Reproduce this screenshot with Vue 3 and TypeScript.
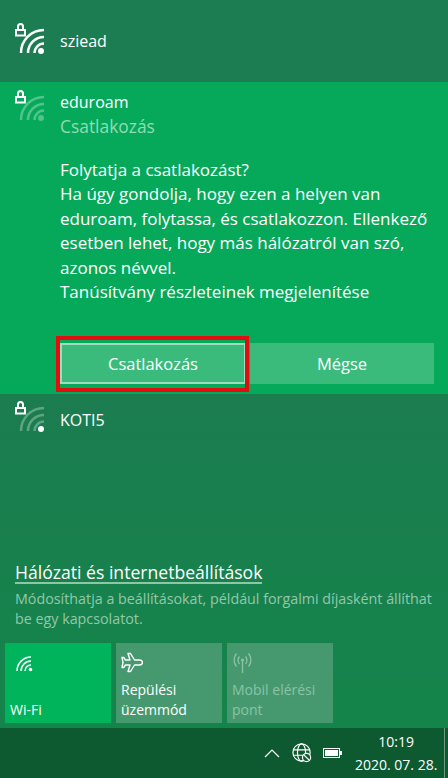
<template>
  <div class="flyout">
    <div class="net-row top">
      <svg class="wifi" viewBox="0 0 32 40" width="32" height="40">
        <path class="lock" d="M2 14h9v5.500H2zM4 14v-3.500a2.500 2.500 0 0 1 5 0V14" />
        <g class="arcs">
          <path d="M7 37a23 23 0 0 1 23-23" />
          <path d="M14 37a16 16 0 0 1 16-16" />
          <path d="M20.500 37a9.500 9.500 0 0 1 9.500-9.500" />
        </g>
        <circle class="dot" cx="27" cy="35" r="3" />
      </svg>
      <span class="net-name">sziead</span>
    </div>

    <section class="selected">
      <div class="sel-head">
        <svg class="wifi" viewBox="0 0 32 40" width="32" height="40">
          <path class="lock" d="M2 14h9v5.500H2zM4 14v-3.500a2.500 2.500 0 0 1 5 0V14" />
          <g class="arcs dim">
            <path d="M7 37a23 23 0 0 1 23-23" />
            <path d="M14 37a16 16 0 0 1 16-16" />
            <path d="M20.500 37a9.500 9.500 0 0 1 9.500-9.500" />
          </g>
          <circle class="dot dim" cx="27" cy="35" r="3" />
        </svg>
        <div>
          <div class="net-name">eduroam</div>
          <div class="net-status">Csatlakozás</div>
        </div>
      </div>
      <div class="message">
        <p v-for="line in messageLines" :key="line">{{ line }}</p>
      </div>
      <div class="actions">
        <button class="btn btn-focus">Csatlakozás<span class="highlight"></span></button>
        <button class="btn">Mégse</button>
      </div>
    </section>

    <div class="lower">
      <div class="net-row koti">
        <svg class="wifi" viewBox="0 0 32 40" width="32" height="40">
          <path class="lock" d="M2 14h9v5.500H2zM4 14v-3.500a2.500 2.500 0 0 1 5 0V14" />
          <g class="arcs dim">
            <path d="M7 37a23 23 0 0 1 23-23" />
            <path d="M14 37a16 16 0 0 1 16-16" />
            <path d="M20.500 37a9.500 9.500 0 0 1 9.500-9.500" />
          </g>
          <circle class="dot" cx="27" cy="35" r="3" />
        </svg>
        <span class="net-name">KOTI5</span>
      </div>

      <div class="settings">
        <a class="settings-link">Hálózati és internetbeállítások</a>
        <p class="settings-help">Módosíthatja a beállításokat, például forgalmi díjasként állíthat be egy kapcsolatot.</p>
      </div>

      <div class="tiles">
        <div class="tile on">
          <svg viewBox="0 0 18 16" width="18" height="16" class="tile-icon">
            <g class="arcs thin">
              <path d="M1 15a14 14 0 0 1 14-14" />
              <path d="M5 15a10 10 0 0 1 10-10" />
              <path d="M9 15a6 6 0 0 1 6-6" />
            </g>
            <circle class="dot" cx="14.500" cy="13.500" r="1.800" />
          </svg>
          <span class="tile-label">Wi-Fi</span>
        </div>
        <div class="tile">
          <svg viewBox="0 0 22 22" width="22" height="22" class="tile-icon">
            <path class="plane" d="M7 1.500h2.500L13.500 8h5c2 0 3 1.500 3 2.500s-1 2.500-3 2.500h-5L9.500 19.500H7L9 13H4.500l-1.800 2.500H1L2 10.500 1 5.500h1.700L4.500 8H9z" />
          </svg>
          <span class="tile-label">Repülési üzemmód</span>
        </div>
        <div class="tile off">
          <svg viewBox="0 0 22 22" width="22" height="22" class="tile-icon">
            <g class="mobile">
              <path d="M4.500 1.500a10 10 0 0 0 0 13M16.500 1.500a10 10 0 0 1 0 13" />
              <path d="M7.500 4.500a6 6 0 0 0 0 7.500M13.500 4.500a6 6 0 0 1 0 7.500" />
              <path d="M10.500 9v12" />
            </g>
            <circle cx="10.500" cy="8" r="1.600" fill="currentColor" />
          </svg>
          <span class="tile-label">Mobil elérési pont</span>
        </div>
      </div>
    </div>

    <footer class="taskbar">
      <svg viewBox="0 0 16 10" width="16" height="10" class="chev"><path d="M1 9l7-7 7 7" /></svg>
      <svg viewBox="0 0 22 22" width="20" height="20" class="globe">
        <circle cx="10.500" cy="10.500" r="9.500" />
        <ellipse cx="10.500" cy="10.500" rx="4.500" ry="9.500" />
        <path d="M1.500 7.500h18M1.500 13.500h18" />
        <circle class="badge" cx="16" cy="16" r="4.500" />
        <path d="M13 13l6 6" />
      </svg>
      <div class="battery"><span class="battery-fill"></span></div>
      <div class="clock">
        <div>10:19</div>
        <div>2020. 07. 28.</div>
      </div>
    </footer>
  </div>
</template>

<script setup lang="ts">
const messageLines: string[] = [
  'Folytatja a csatlakozást?',
  'Ha úgy gondolja, hogy ezen a helyen van',
  'eduroam, folytassa, és csatlakozzon. Ellenkező',
  'esetben lehet, hogy más hálózatról van szó,',
  'azonos névvel.',
  'Tanúsítvány részleteinek megjelenítése',
]
</script>

<style>
html,
body {
  margin: 0;
  background: #0e5a30;
}
</style>

<style scoped>
.flyout {
  width: 448px;
  height: 778px;
  display: flex;
  flex-direction: column;
  overflow: hidden;
  color: #fff;
  font-family: "Open Sans", "Noto Sans", sans-serif;
  font-size: 16px;
}

p {
  margin: 0;
}

.wifi {
  flex: none;
  margin-right: 14px;
}

.lock,
.arcs path {
  fill: none;
  stroke: #fff;
}

.lock {
  stroke-width: 2;
}

.arcs path {
  stroke-width: 2.500;
}

.arcs.thin path {
  stroke-width: 1.500;
}

.arcs.dim path {
  opacity: 0.3;
}

.dot {
  fill: #fff;
}

.dot.dim {
  opacity: 0.3;
}

.net-row {
  display: flex;
  padding-left: 14px;
  background: #1c7d52;
}

.net-row.top {
  height: 82px;
  flex: none;
  padding-top: 16px;
  box-sizing: border-box;
}

.net-row .net-name {
  margin-top: 14px;
}

.selected {
  height: 312px;
  flex: none;
  box-sizing: border-box;
  background: #06a95a;
  display: flex;
  flex-direction: column;
}

.sel-head {
  display: flex;
  padding-left: 14px;
  padding-top: 1px;
  height: 55px;
  box-sizing: border-box;
}

.sel-head .net-name {
  margin-top: 7px;
  line-height: 24px;
}

.net-status {
  color: #8fdcb6;
  font-size: 17.400px;
  line-height: 24px;
}

.message {
  padding: 21px 14px 0 60px;
  font-size: 17px;
  line-height: 24.400px;
  white-space: nowrap;
}

.actions {
  display: flex;
  margin-top: auto;
  margin-bottom: 10px;
  padding: 0 14px 0 60px;
  gap: 4px;
}

.btn {
  position: relative;
  flex: 1;
  height: 41px;
  border: 0;
  padding: 0;
  background: #3abb7c;
  color: #fff;
  font: inherit;
  font-size: 16.500px;
}

.btn-focus {
  flex: none;
  width: 186px;
  box-sizing: border-box;
  border: 2px solid #9ddcbd;
}

.highlight {
  position: absolute;
  top: -9px;
  right: -5px;
  bottom: -10px;
  left: -6px;
  border: 4px solid #e20d0f;
}

.lower {
  flex: 1;
  display: flex;
  flex-direction: column;
  background: linear-gradient(#1b7c50, #14854a);
}

.net-row.koti {
  background: transparent;
  height: 40px;
}

.net-row.koti .net-name {
  margin-top: 15px;
}

.settings {
  padding: 0 8px 0 15px;
  margin-top: auto;
}

.settings-link {
  display: inline-block;
  font-size: 17.600px;
  line-height: 20px;
  border-bottom: 2px solid #8fc6a8;
}

.settings-help {
  margin-top: 5px;
  color: #93c8aa;
  font-size: 14.300px;
  line-height: 20px;
}

.tiles {
  display: flex;
  gap: 5px;
  padding: 14px 5px 5px;
}

.tile {
  width: 106px;
  height: 80px;
  box-sizing: border-box;
  padding: 9px 5px 3px;
  background: #46996f;
  display: flex;
  flex-direction: column;
  justify-content: space-between;
  font-size: 14px;
  line-height: 20px;
}

.tile.on {
  background: #00b45c;
}

.tile.on .tile-icon {
  margin: 4px 0 0 6px;
}

.tile.off {
  color: #8bc3a5;
}

.tile-label {
  display: block;
}

.tile-icon {
  display: block;
}

.plane {
  fill: none;
  stroke: #fff;
  stroke-width: 1.400;
  stroke-linejoin: round;
}

.mobile path {
  fill: none;
  stroke: currentColor;
  stroke-width: 1.300;
}

.taskbar {
  height: 50px;
  flex: none;
  box-sizing: border-box;
  background: #0e5a30;
  display: flex;
  align-items: center;
  padding-left: 264px;
  position: relative;
  font-size: 14px;
  border-right: 1px solid #6f9a80;
  margin-right: 3px;
}

.chev {
  fill: none;
  stroke: #fff;
  stroke-width: 1.200;
  margin-right: 12px;
}

.globe {
  fill: none;
  stroke: #fff;
  stroke-width: 1.300;
  margin-right: 11px;
}

.globe .badge {
  fill: #0e5a30;
}

.battery {
  position: relative;
  width: 13px;
  height: 6px;
  border: 1px solid #fff;
  padding: 1px;
  margin-right: 15px;
}

.battery::after {
  content: "";
  position: absolute;
  right: -3px;
  top: 2px;
  width: 2px;
  height: 4px;
  background: #fff;
}

.battery-fill {
  display: block;
  height: 100%;
  background: #fff;
}

.clock {
  text-align: center;
  line-height: 23px;
  white-space: nowrap;
}
</style>
